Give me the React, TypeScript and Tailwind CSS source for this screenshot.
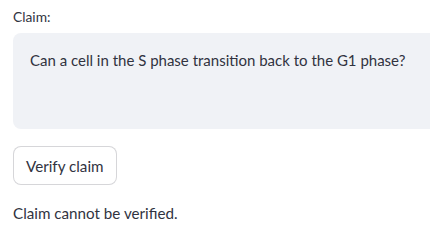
export default function App() {
  return (
    <div
      className="w-[430px] h-[242px] overflow-hidden bg-white pl-[13px] pt-[7px] text-[#31333f]"
      style={{ fontFamily: 'Lato, "Noto Sans", sans-serif' }}
    >
      <div className="text-[13.8px] leading-[20px] h-[26px]">Claim:</div>
      <div className="w-[440px] h-[96px] rounded-[8px] bg-[#f0f2f6] pl-[17px] pt-[15px] text-[15px] leading-[24px]">
        Can a cell in the S phase transition back to the G1 phase?
      </div>
      <button className="mt-[17px] h-[39px] px-[12px] rounded-[8px] border border-[#31333f]/20 bg-white text-[15.2px] leading-[24px]">
        Verify claim
      </button>
      <p className="mt-[16px] text-[15.2px] leading-[24px]">Claim cannot be verified.</p>
    </div>
  )
}
